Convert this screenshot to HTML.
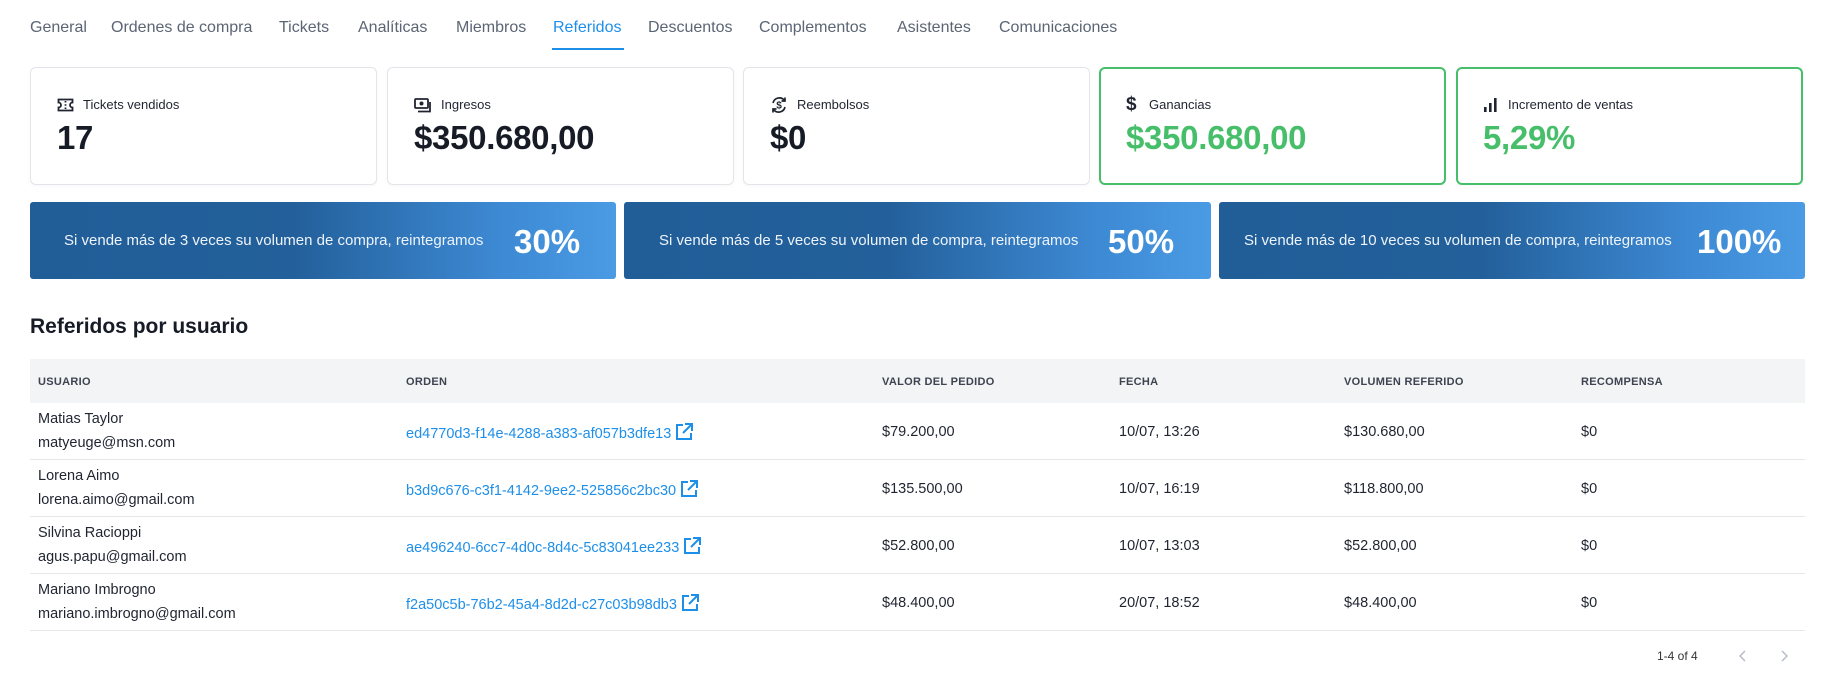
<!DOCTYPE html>
<html><head><meta charset="utf-8"><style>
*{margin:0;padding:0;box-sizing:border-box}
body{width:1828px;height:697px;background:#fff;font-family:"Liberation Sans",sans-serif;color:#1f2430;position:relative;overflow:hidden}
.a{position:absolute;white-space:nowrap}
.tab{position:absolute;top:18px;font-size:16px;color:#5b6574;line-height:20px}
.card{position:absolute;top:67px;width:347px;height:118px;border:1px solid #e3e5ea;border-radius:6px;background:#fff;box-shadow:0 1px 4px rgba(0,0,0,.04)}
.card.g{border:2px solid #47bf6a}
.lbl{position:absolute;left:26px;top:28px;height:18px;line-height:18px;font-size:13px;display:flex;align-items:center;gap:9px;color:#1f2430}
.val{position:absolute;left:26px;top:51px;font-size:33px;font-weight:bold;color:#161b26;letter-spacing:-0.3px}
.card.g .lbl{left:25px;top:27px}.card.g .val{left:25px;top:50px;color:#47bf6a}
.ban{position:absolute;top:202px;height:77px;border-radius:3px;background:linear-gradient(90deg,#215e98 0%,#23609b 45%,#3d89d3 80%,#4a9be4 100%);color:#fff}
.ban .t{position:absolute;top:30px;font-size:15px;color:#eef4fb}
.ban .p{position:absolute;top:21px;font-size:33px;font-weight:bold}
.th{position:absolute;top:376px;font-size:11px;font-weight:bold;color:#3d4450;letter-spacing:.3px}
.c{position:absolute;font-size:14.5px;color:#1f2430}
.lnk{color:#1e8fe9}
.line{position:absolute;left:30px;width:1775px;height:1px;background:#e5e7eb}
</style></head><body>
<div class="tab" style="left:30px">General</div>
<div class="tab" style="left:111px">Ordenes de compra</div>
<div class="tab" style="left:279px">Tickets</div>
<div class="tab" style="left:358px">Analíticas</div>
<div class="tab" style="left:456px">Miembros</div>
<div class="tab" style="left:553px;color:#1e8fe9">Referidos</div>
<div class="a" style="left:552px;top:48px;width:72px;height:2px;background:#1e8fe9"></div>
<div class="tab" style="left:648px">Descuentos</div>
<div class="tab" style="left:759px">Complementos</div>
<div class="tab" style="left:897px">Asistentes</div>
<div class="tab" style="left:999px">Comunicaciones</div>

<div class="card" style="left:30px"><div class="lbl"><svg width="17" height="14" viewBox="0 0 17 14"><path d="M1.5 1.5h14v3a2.2 2.2 0 0 0 0 5v3h-14v-3a2.2 2.2 0 0 0 0-5z" fill="none" stroke="#1f2430" stroke-width="1.8"/><path d="M8.5 3v1.5M8.5 6.3v1.4M8.5 9.5v1.5" stroke="#1f2430" stroke-width="1.8"/></svg>Tickets vendidos</div><div class="val">17</div></div>
<div class="card" style="left:387px"><div class="lbl"><svg width="18" height="15" viewBox="0 0 18 15"><rect x="1" y="1" width="13" height="9" rx="1" fill="none" stroke="#1f2430" stroke-width="1.8"/><circle cx="7.5" cy="5.5" r="2" fill="#1f2430"/><path d="M4 13.5h12V4" fill="none" stroke="#1f2430" stroke-width="1.8"/></svg>Ingresos</div><div class="val">$350.680,00</div></div>
<div class="card" style="left:743px"><div class="lbl"><svg width="18" height="18" viewBox="0 0 18 18"><path d="M3 7a6.5 6.5 0 0 1 11.5-2.5M15 11a6.5 6.5 0 0 1-11.5 2.5" fill="none" stroke="#1f2430" stroke-width="1.7"/><path d="M15 1.5v3.5h-3.5M3 16.5V13h3.5" fill="none" stroke="#1f2430" stroke-width="1.7"/><text x="9" y="12.5" font-size="10" font-weight="bold" text-anchor="middle" fill="#1f2430" font-family="Liberation Sans">$</text></svg>Reembolsos</div><div class="val">$0</div></div>
<div class="card g" style="left:1099px"><div class="lbl"><span style="font-size:19px;font-weight:bold;width:14px;line-height:18px">$</span>Ganancias</div><div class="val">$350.680,00</div></div>
<div class="card g" style="left:1456px"><div class="lbl"><svg width="16" height="16" viewBox="0 0 16 16"><rect x="1" y="10" width="2.6" height="5" fill="#1f2430"/><rect x="6" y="6" width="2.6" height="9" fill="#1f2430"/><rect x="11" y="1" width="2.6" height="14" fill="#1f2430"/></svg>Incremento de ventas</div><div class="val">5,29%</div></div>

<div class="ban" style="left:30px;width:586px"><div class="t" style="left:34px">Si vende más de 3 veces su volumen de compra, reintegramos</div><div class="p" style="left:484px">30%</div></div>
<div class="ban" style="left:624px;width:587px"><div class="t" style="left:35px">Si vende más de 5 veces su volumen de compra, reintegramos</div><div class="p" style="left:484px">50%</div></div>
<div class="ban" style="left:1219px;width:586px"><div class="t" style="left:25px">Si vende más de 10 veces su volumen de compra, reintegramos</div><div class="p" style="left:478px">100%</div></div>

<div class="a" style="left:30px;top:315px;font-size:21px;font-weight:bold;color:#161b26">Referidos por usuario</div>
<div class="a" style="left:30px;top:359px;width:1775px;height:44px;background:#f3f4f6"></div>
<div class="th" style="left:38px">USUARIO</div>
<div class="th" style="left:406px">ORDEN</div>
<div class="th" style="left:882px">VALOR DEL PEDIDO</div>
<div class="th" style="left:1119px">FECHA</div>
<div class="th" style="left:1344px">VOLUMEN REFERIDO</div>
<div class="th" style="left:1581px">RECOMPENSA</div>

<div class="line" style="top:459px"></div>
<div class="line" style="top:516px"></div>
<div class="line" style="top:573px"></div>
<div class="line" style="top:630px"></div>

<div class="c" style="left:38px;top:411px">Matias Taylor</div><div class="c" style="left:38px;top:435px">matyeuge@msn.com</div>
<div class="c lnk" style="left:406px;top:423px">ed4770d3-f14e-4288-a383-af057b3dfe13 <svg width="18" height="18" viewBox="0 0 18 18" style="vertical-align:-3px"><path d="M8 2H2v14h14v-6" fill="none" stroke="#1e8fe9" stroke-width="2"/><path d="M10 1h7v7M17 1 8 10" fill="none" stroke="#1e8fe9" stroke-width="2"/></svg></div>
<div class="c" style="left:882px;top:424px">$79.200,00</div><div class="c" style="left:1119px;top:424px">10/07, 13:26</div><div class="c" style="left:1344px;top:424px">$130.680,00</div><div class="c" style="left:1581px;top:424px">$0</div>

<div class="c" style="left:38px;top:468px">Lorena Aimo</div><div class="c" style="left:38px;top:492px">lorena.aimo@gmail.com</div>
<div class="c lnk" style="left:406px;top:480px">b3d9c676-c3f1-4142-9ee2-525856c2bc30 <svg width="18" height="18" viewBox="0 0 18 18" style="vertical-align:-3px"><path d="M8 2H2v14h14v-6" fill="none" stroke="#1e8fe9" stroke-width="2"/><path d="M10 1h7v7M17 1 8 10" fill="none" stroke="#1e8fe9" stroke-width="2"/></svg></div>
<div class="c" style="left:882px;top:481px">$135.500,00</div><div class="c" style="left:1119px;top:481px">10/07, 16:19</div><div class="c" style="left:1344px;top:481px">$118.800,00</div><div class="c" style="left:1581px;top:481px">$0</div>

<div class="c" style="left:38px;top:525px">Silvina Racioppi</div><div class="c" style="left:38px;top:549px">agus.papu@gmail.com</div>
<div class="c lnk" style="left:406px;top:537px">ae496240-6cc7-4d0c-8d4c-5c83041ee233 <svg width="18" height="18" viewBox="0 0 18 18" style="vertical-align:-3px"><path d="M8 2H2v14h14v-6" fill="none" stroke="#1e8fe9" stroke-width="2"/><path d="M10 1h7v7M17 1 8 10" fill="none" stroke="#1e8fe9" stroke-width="2"/></svg></div>
<div class="c" style="left:882px;top:538px">$52.800,00</div><div class="c" style="left:1119px;top:538px">10/07, 13:03</div><div class="c" style="left:1344px;top:538px">$52.800,00</div><div class="c" style="left:1581px;top:538px">$0</div>

<div class="c" style="left:38px;top:582px">Mariano Imbrogno</div><div class="c" style="left:38px;top:606px">mariano.imbrogno@gmail.com</div>
<div class="c lnk" style="left:406px;top:594px">f2a50c5b-76b2-45a4-8d2d-c27c03b98db3 <svg width="18" height="18" viewBox="0 0 18 18" style="vertical-align:-3px"><path d="M8 2H2v14h14v-6" fill="none" stroke="#1e8fe9" stroke-width="2"/><path d="M10 1h7v7M17 1 8 10" fill="none" stroke="#1e8fe9" stroke-width="2"/></svg></div>
<div class="c" style="left:882px;top:595px">$48.400,00</div><div class="c" style="left:1119px;top:595px">20/07, 18:52</div><div class="c" style="left:1344px;top:595px">$48.400,00</div><div class="c" style="left:1581px;top:595px">$0</div>

<div class="a" style="left:1657px;top:649px;font-size:12px;color:#333">1-4 of 4</div>
<svg class="a" style="left:1738px;top:649px" width="10" height="14" viewBox="0 0 10 14"><path d="M7 2 2 7l5 5" fill="none" stroke="#b8bec8" stroke-width="1.5"/></svg>
<svg class="a" style="left:1779px;top:649px" width="10" height="14" viewBox="0 0 10 14"><path d="M3 2l5 5-5 5" fill="none" stroke="#b8bec8" stroke-width="1.5"/></svg>
</body></html>
